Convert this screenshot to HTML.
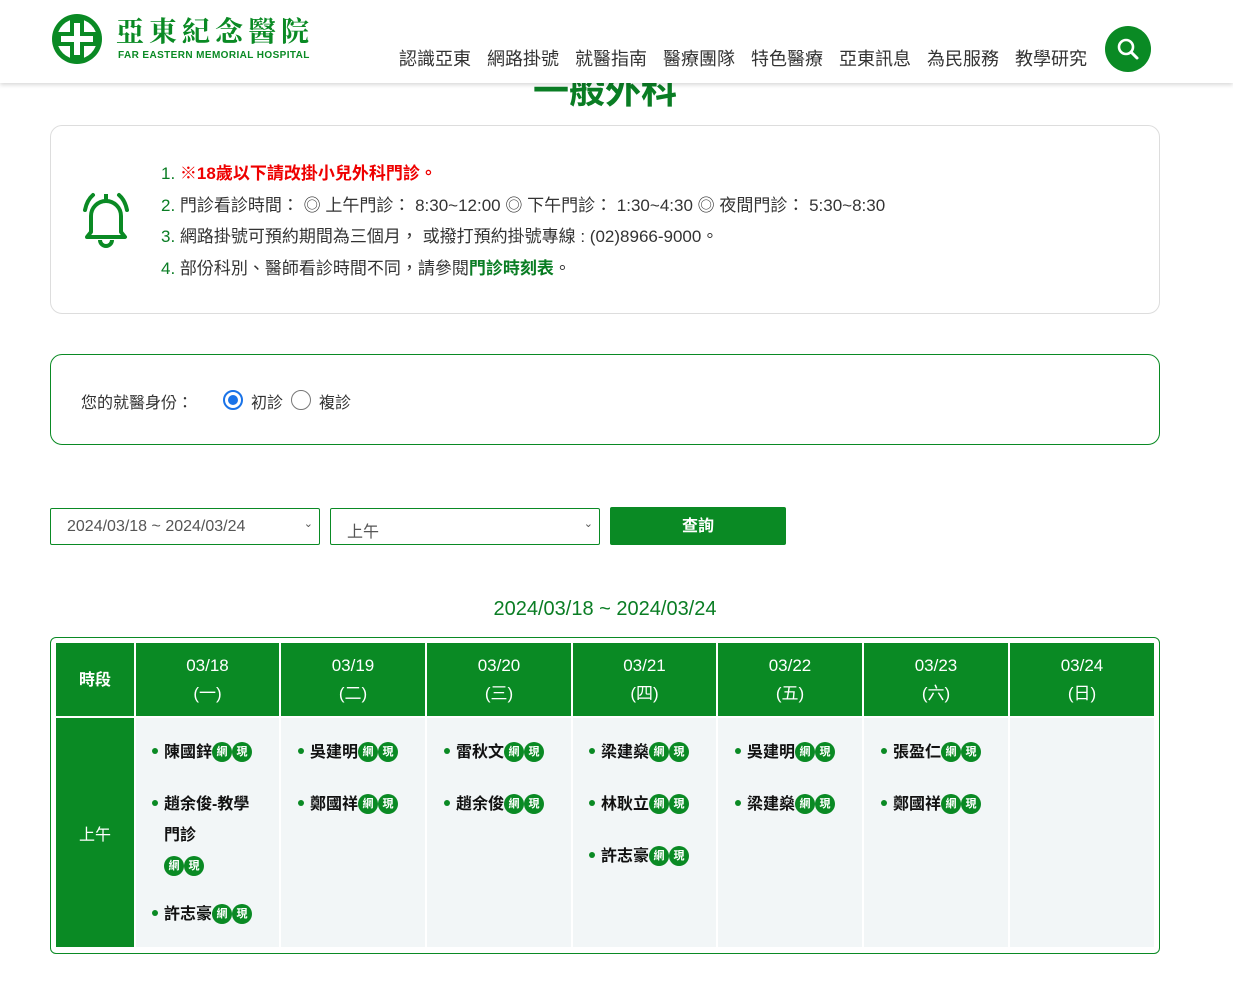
<!DOCTYPE html>
<html><head><meta charset="utf-8"><style>
*{box-sizing:border-box;margin:0;padding:0}
body{width:1233px;height:994px;overflow:hidden;background:#fff;font-family:"Liberation Sans","Noto Sans CJK TC",sans-serif;color:#333;position:relative}
.hdr{position:absolute;left:0;top:0;width:1233px;height:83px;background:#fff;box-shadow:0 2px 4px rgba(0,0,0,.15);z-index:5}
.title{position:absolute;left:0;width:1210px;top:62px;text-align:center;font-size:36px;font-weight:bold;color:#0a7d24;z-index:1}
.nav{position:absolute;left:399px;top:45px;font-size:18px;color:#333;white-space:nowrap}
.nav span{display:inline-block;width:88px}
.srch{position:absolute;left:1105px;top:26px;width:46px;height:46px;border-radius:50%;background:#0a8a24}
.box1{position:absolute;left:50px;top:125px;width:1110px;height:189px;border:1px solid #ddd;border-radius:12px}
.box1 p{position:absolute;left:110px;font-size:17px;color:#333}
.box2{position:absolute;left:50px;top:354px;width:1110px;height:91px;border:1px solid #0a8a24;border-radius:12px;font-size:16px}
.sel{position:absolute;top:508px;height:37px;border:1px solid #0a8a24;border-radius:2px;font-size:16px;color:#555;padding:9px 16px;background:#fff}
.btn{position:absolute;left:610px;top:507px;width:176px;height:38px;background:#0a8a24;color:#fff;font-size:16px;font-weight:bold;text-align:center;line-height:40px;border-radius:2px}
.tw{position:absolute;left:50px;top:637px;width:1110px;height:317px;border:1px solid #0a8a24;border-radius:6px}
.c{position:absolute;background:#f2f6f7}
.h{position:absolute;background:#0a8a24;color:#fff;text-align:center;font-size:17px;line-height:28px;padding-top:9px}
.d{position:absolute;font-size:16px;font-weight:bold;color:#111;line-height:31px}
.d:before{content:"";position:absolute;left:-12px;top:11px;width:6px;height:6px;border-radius:50%;background:#0a8a24}
.b{display:inline-block;width:20px;height:20px;border-radius:50%;background:#0a8a24;color:#fff;font-size:11px;line-height:20px;text-align:center;vertical-align:2px}
</style></head><body>
<div class="title">一般外科</div>
<div class="hdr">
<svg style="position:absolute;left:50px;top:12px" width="54" height="54" viewBox="0 0 54 54"><circle cx="27" cy="27" r="25" fill="#0a8a24"/><circle cx="27" cy="27" r="20" fill="#fff"/><rect x="7" y="20" width="40" height="14" fill="#0a8a24"/><rect x="20" y="7" width="14" height="40" fill="#0a8a24"/><rect x="24" y="11" width="6" height="32" fill="#fff"/><rect x="11" y="24" width="32" height="6" fill="#fff"/></svg>
<div style="position:absolute;left:116px;top:10px;font-size:28px;font-weight:bold;color:#0a8a24;letter-spacing:5px;font-family:'Noto Serif CJK SC',serif">亞東紀念醫院</div>
<div style="position:absolute;left:118px;top:50px;font-size:10px;font-weight:bold;color:#0a8a24;letter-spacing:.4px">FAR EASTERN MEMORIAL HOSPITAL</div>
<div class="nav"><span>認識亞東</span><span>網路掛號</span><span>就醫指南</span><span>醫療團隊</span><span>特色醫療</span><span>亞東訊息</span><span>為民服務</span><span>教學研究</span></div>
<div class="srch"><svg width="46" height="46" viewBox="0 0 46 46"><circle cx="21" cy="21" r="7" fill="none" stroke="#fff" stroke-width="2.6"/><line x1="26" y1="26" x2="32" y2="32" stroke="#fff" stroke-width="3" stroke-linecap="round"/></svg></div>
</div>
<div class="box1">
<svg style="position:absolute;left:28px;top:64px" width="54" height="58" viewBox="0 0 54 58"><path d="M12 42 V26 a15 15 0 0 1 30 0 V42 l4 5 H8 z" fill="none" stroke="#0a8a24" stroke-width="4" stroke-linejoin="round"/><path d="M21 50 a6 6 0 0 0 12 0" fill="none" stroke="#0a8a24" stroke-width="4"/><line x1="27" y1="4" x2="27" y2="10" stroke="#0a8a24" stroke-width="4"/><path d="M6 20 Q8 10 14 5 M48 20 Q46 10 40 5" fill="none" stroke="#0a8a24" stroke-width="4" stroke-linecap="round"/></svg>
<p style="top:33px"><span style="color:#0a7d24">1.</span> <b style="color:#e00">※18歲以下請改掛小兒外科門診。</b></p>
<p style="top:65px"><span style="color:#0a7d24">2.</span> 門診看診時間： ◎ 上午門診： 8:30~12:00 ◎ 下午門診： 1:30~4:30 ◎ 夜間門診： 5:30~8:30</p>
<p style="top:96px"><span style="color:#0a7d24">3.</span> 網路掛號可預約期間為三個月， 或撥打預約掛號專線 : (02)8966-9000。</p>
<p style="top:128px"><span style="color:#0a7d24">4.</span> 部份科別、醫師看診時間不同，請參閱<b style="color:#0a7d24">門診時刻表</b>。</p>
</div>
<div class="box2">
<span style="position:absolute;left:30px;top:34px">您的就醫身份：</span>
<span style="position:absolute;left:172px;top:35px;width:20px;height:20px;border-radius:50%;border:2px solid #1a73e8"><span style="position:absolute;left:3px;top:3px;width:10px;height:10px;border-radius:50%;background:#1a73e8"></span></span>
<span style="position:absolute;left:200px;top:34px">初診</span>
<span style="position:absolute;left:240px;top:35px;width:20px;height:20px;border-radius:50%;border:1px solid #777"></span>
<span style="position:absolute;left:268px;top:34px">複診</span>
</div>
<div class="sel" style="left:50px;width:270px">2024/03/18 ~ 2024/03/24<span style="position:absolute;right:6px;top:8px;font-size:11px">⌄</span></div>
<div class="sel" style="left:330px;width:270px">上午<span style="position:absolute;right:6px;top:8px;font-size:11px">⌄</span></div>
<div class="btn">查詢</div>
<div style="position:absolute;left:0;width:1210px;top:598px;text-align:center;font-size:20px;color:#0a7d24">2024/03/18 ~ 2024/03/24</div>
<div class="tw"></div>
<div class="h" style="left:56px;top:643px;width:78px;height:73px;padding-top:24px;font-weight:bold;font-size:16px">時段</div>
<div class="h" style="left:136px;top:643px;width:143px;height:73px">03/18<br>(一)</div>
<div class="h" style="left:281px;top:643px;width:144px;height:73px">03/19<br>(二)</div>
<div class="h" style="left:427px;top:643px;width:144px;height:73px">03/20<br>(三)</div>
<div class="h" style="left:573px;top:643px;width:143px;height:73px">03/21<br>(四)</div>
<div class="h" style="left:718px;top:643px;width:144px;height:73px">03/22<br>(五)</div>
<div class="h" style="left:864px;top:643px;width:144px;height:73px">03/23<br>(六)</div>
<div class="h" style="left:1010px;top:643px;width:144px;height:73px">03/24<br>(日)</div>
<div class="h" style="left:56px;top:718px;width:78px;height:229px;padding-top:104px;font-size:16px">上午</div>
<div class="c" style="left:136px;top:718px;width:143px;height:229px"></div>
<div class="c" style="left:281px;top:718px;width:144px;height:229px"></div>
<div class="c" style="left:427px;top:718px;width:144px;height:229px"></div>
<div class="c" style="left:573px;top:718px;width:143px;height:229px"></div>
<div class="c" style="left:718px;top:718px;width:144px;height:229px"></div>
<div class="c" style="left:864px;top:718px;width:144px;height:229px"></div>
<div class="c" style="left:1010px;top:718px;width:144px;height:229px"></div>
<div class="d" style="left:164px;top:737px">陳國鋅<span class="b">網</span><span class="b">現</span></div>
<div class="d" style="left:164px;top:789px;width:100px">趙余俊-教學門診<br><span class="b">網</span><span class="b">現</span></div>
<div class="d" style="left:164px;top:899px">許志豪<span class="b">網</span><span class="b">現</span></div>
<div class="d" style="left:310px;top:737px">吳建明<span class="b">網</span><span class="b">現</span></div>
<div class="d" style="left:310px;top:789px">鄭國祥<span class="b">網</span><span class="b">現</span></div>
<div class="d" style="left:456px;top:737px">雷秋文<span class="b">網</span><span class="b">現</span></div>
<div class="d" style="left:456px;top:789px">趙余俊<span class="b">網</span><span class="b">現</span></div>
<div class="d" style="left:601px;top:737px">梁建燊<span class="b">網</span><span class="b">現</span></div>
<div class="d" style="left:601px;top:789px">林耿立<span class="b">網</span><span class="b">現</span></div>
<div class="d" style="left:601px;top:841px">許志豪<span class="b">網</span><span class="b">現</span></div>
<div class="d" style="left:747px;top:737px">吳建明<span class="b">網</span><span class="b">現</span></div>
<div class="d" style="left:747px;top:789px">梁建燊<span class="b">網</span><span class="b">現</span></div>
<div class="d" style="left:893px;top:737px">張盈仁<span class="b">網</span><span class="b">現</span></div>
<div class="d" style="left:893px;top:789px">鄭國祥<span class="b">網</span><span class="b">現</span></div>
</body></html>
